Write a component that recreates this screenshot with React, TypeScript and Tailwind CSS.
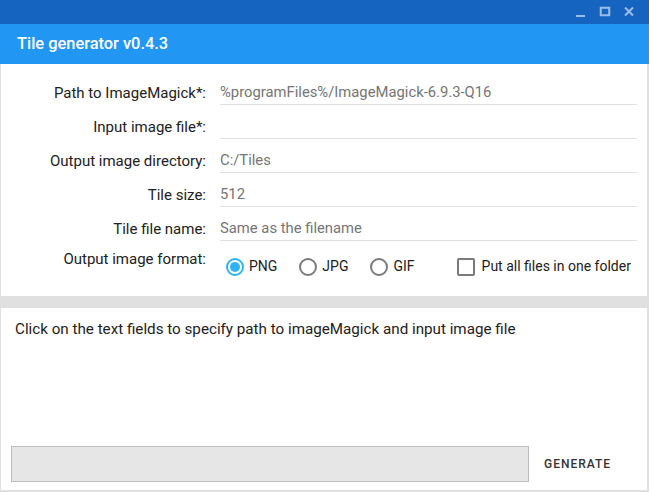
import React from "react";

const fields = [
  { label: "Path to ImageMagick*:", value: "%programFiles%/ImageMagick-6.9.3-Q16" },
  { label: "Input image file*:", value: "" },
  { label: "Output image directory:", value: "C:/Tiles" },
  { label: "Tile size:", value: "512" },
  { label: "Tile file name:", value: "Same as the filename" },
];

const formats = ["PNG", "JPG", "GIF"];

function Radio({ label, checked }: { label: string; checked?: boolean }) {
  return (
    <div className="flex items-center gap-[5px]">
      <span
        className={`flex h-[18px] w-[18px] items-center justify-center rounded-full border-2 ${
          checked ? "border-[#2db3f4]" : "border-[#7a7a7a]"
        }`}
      >
        {checked && <span className="h-[10px] w-[10px] rounded-full bg-[#2db3f4]" />}
      </span>
      <span className="text-[14px] text-[#212121]">{label}</span>
    </div>
  );
}

export default function App() {
  return (
    <div className="flex h-[492px] w-[649px] flex-col bg-white font-['Roboto',sans-serif]">
      <div className="flex h-6 shrink-0 items-center justify-end gap-[12px] bg-[#1565c0] pr-[14px] text-[#9dbde9]">
        <svg width="12" height="12" viewBox="0 0 12 12">
          <rect x="1" y="9" width="9" height="2" fill="currentColor" />
        </svg>
        <svg width="12" height="12" viewBox="0 0 12 12">
          <rect x="1.75" y="1.75" width="8.5" height="7.5" fill="none" stroke="currentColor" strokeWidth="2" />
        </svg>
        <svg width="12" height="12" viewBox="0 0 12 12">
          <path d="M2 1.5l8 8M10 1.5l-8 8" stroke="currentColor" strokeWidth="2" />
        </svg>
      </div>

      <div className="flex h-10 shrink-0 items-center bg-[#2196f3] pl-[17px] text-[16.4px] font-medium text-white">
        Tile generator v0.4.3
      </div>

      <div className="flex flex-1 flex-col border-x-2 border-b-2 border-[#e0e0e0] border-l-[1px]">
        <div className="flex flex-col pt-[12px]">
          {fields.map((f) => (
            <div key={f.label} className="flex h-[34px] items-center">
              <div className="w-[205px] text-right text-[15px] text-[#212121]">{f.label}</div>
              <div className="ml-[14px] mr-[10px] flex h-[24px] flex-1 items-center border-b border-[#e0e0e0] text-[14.8px] text-[#757575]">
                {f.value}
              </div>
            </div>
          ))}
          <div className="flex h-[42px] items-start pt-[2px]">
            <div className="w-[205px] text-right text-[15px] text-[#212121]">Output image format:</div>
            <div className="ml-[20px] mt-[8px] flex items-center gap-[22px]">
              {formats.map((f, i) => (
                <Radio key={f} label={f} checked={i === 0} />
              ))}
              <div className="ml-[20px] flex items-center gap-[7px]">
                <span className="h-[18px] w-[18px] rounded-[2px] border-2 border-[#7a7a7a]" />
                <span className="text-[14px] text-[#212121]">Put all files in one folder</span>
              </div>
            </div>
          </div>
        </div>

        <div className="mt-[8px] h-[12px] shrink-0 bg-[#e0e0e0]" />

        <div className="flex-1 px-[14px] pt-[10px] text-[15.2px] text-[#212121]">
          Click on the text fields to specify path to imageMagick and input image file
        </div>

        <div className="flex items-center pb-[8px] pl-[10px]">
          <div className="h-[36px] w-[518px] border border-[#bdbdbd] bg-[#e6e6e6]" />
          <button className="ml-[15px] text-[12px] font-medium tracking-[1px] text-[#333333]">GENERATE</button>
        </div>
      </div>
    </div>
  );
}
